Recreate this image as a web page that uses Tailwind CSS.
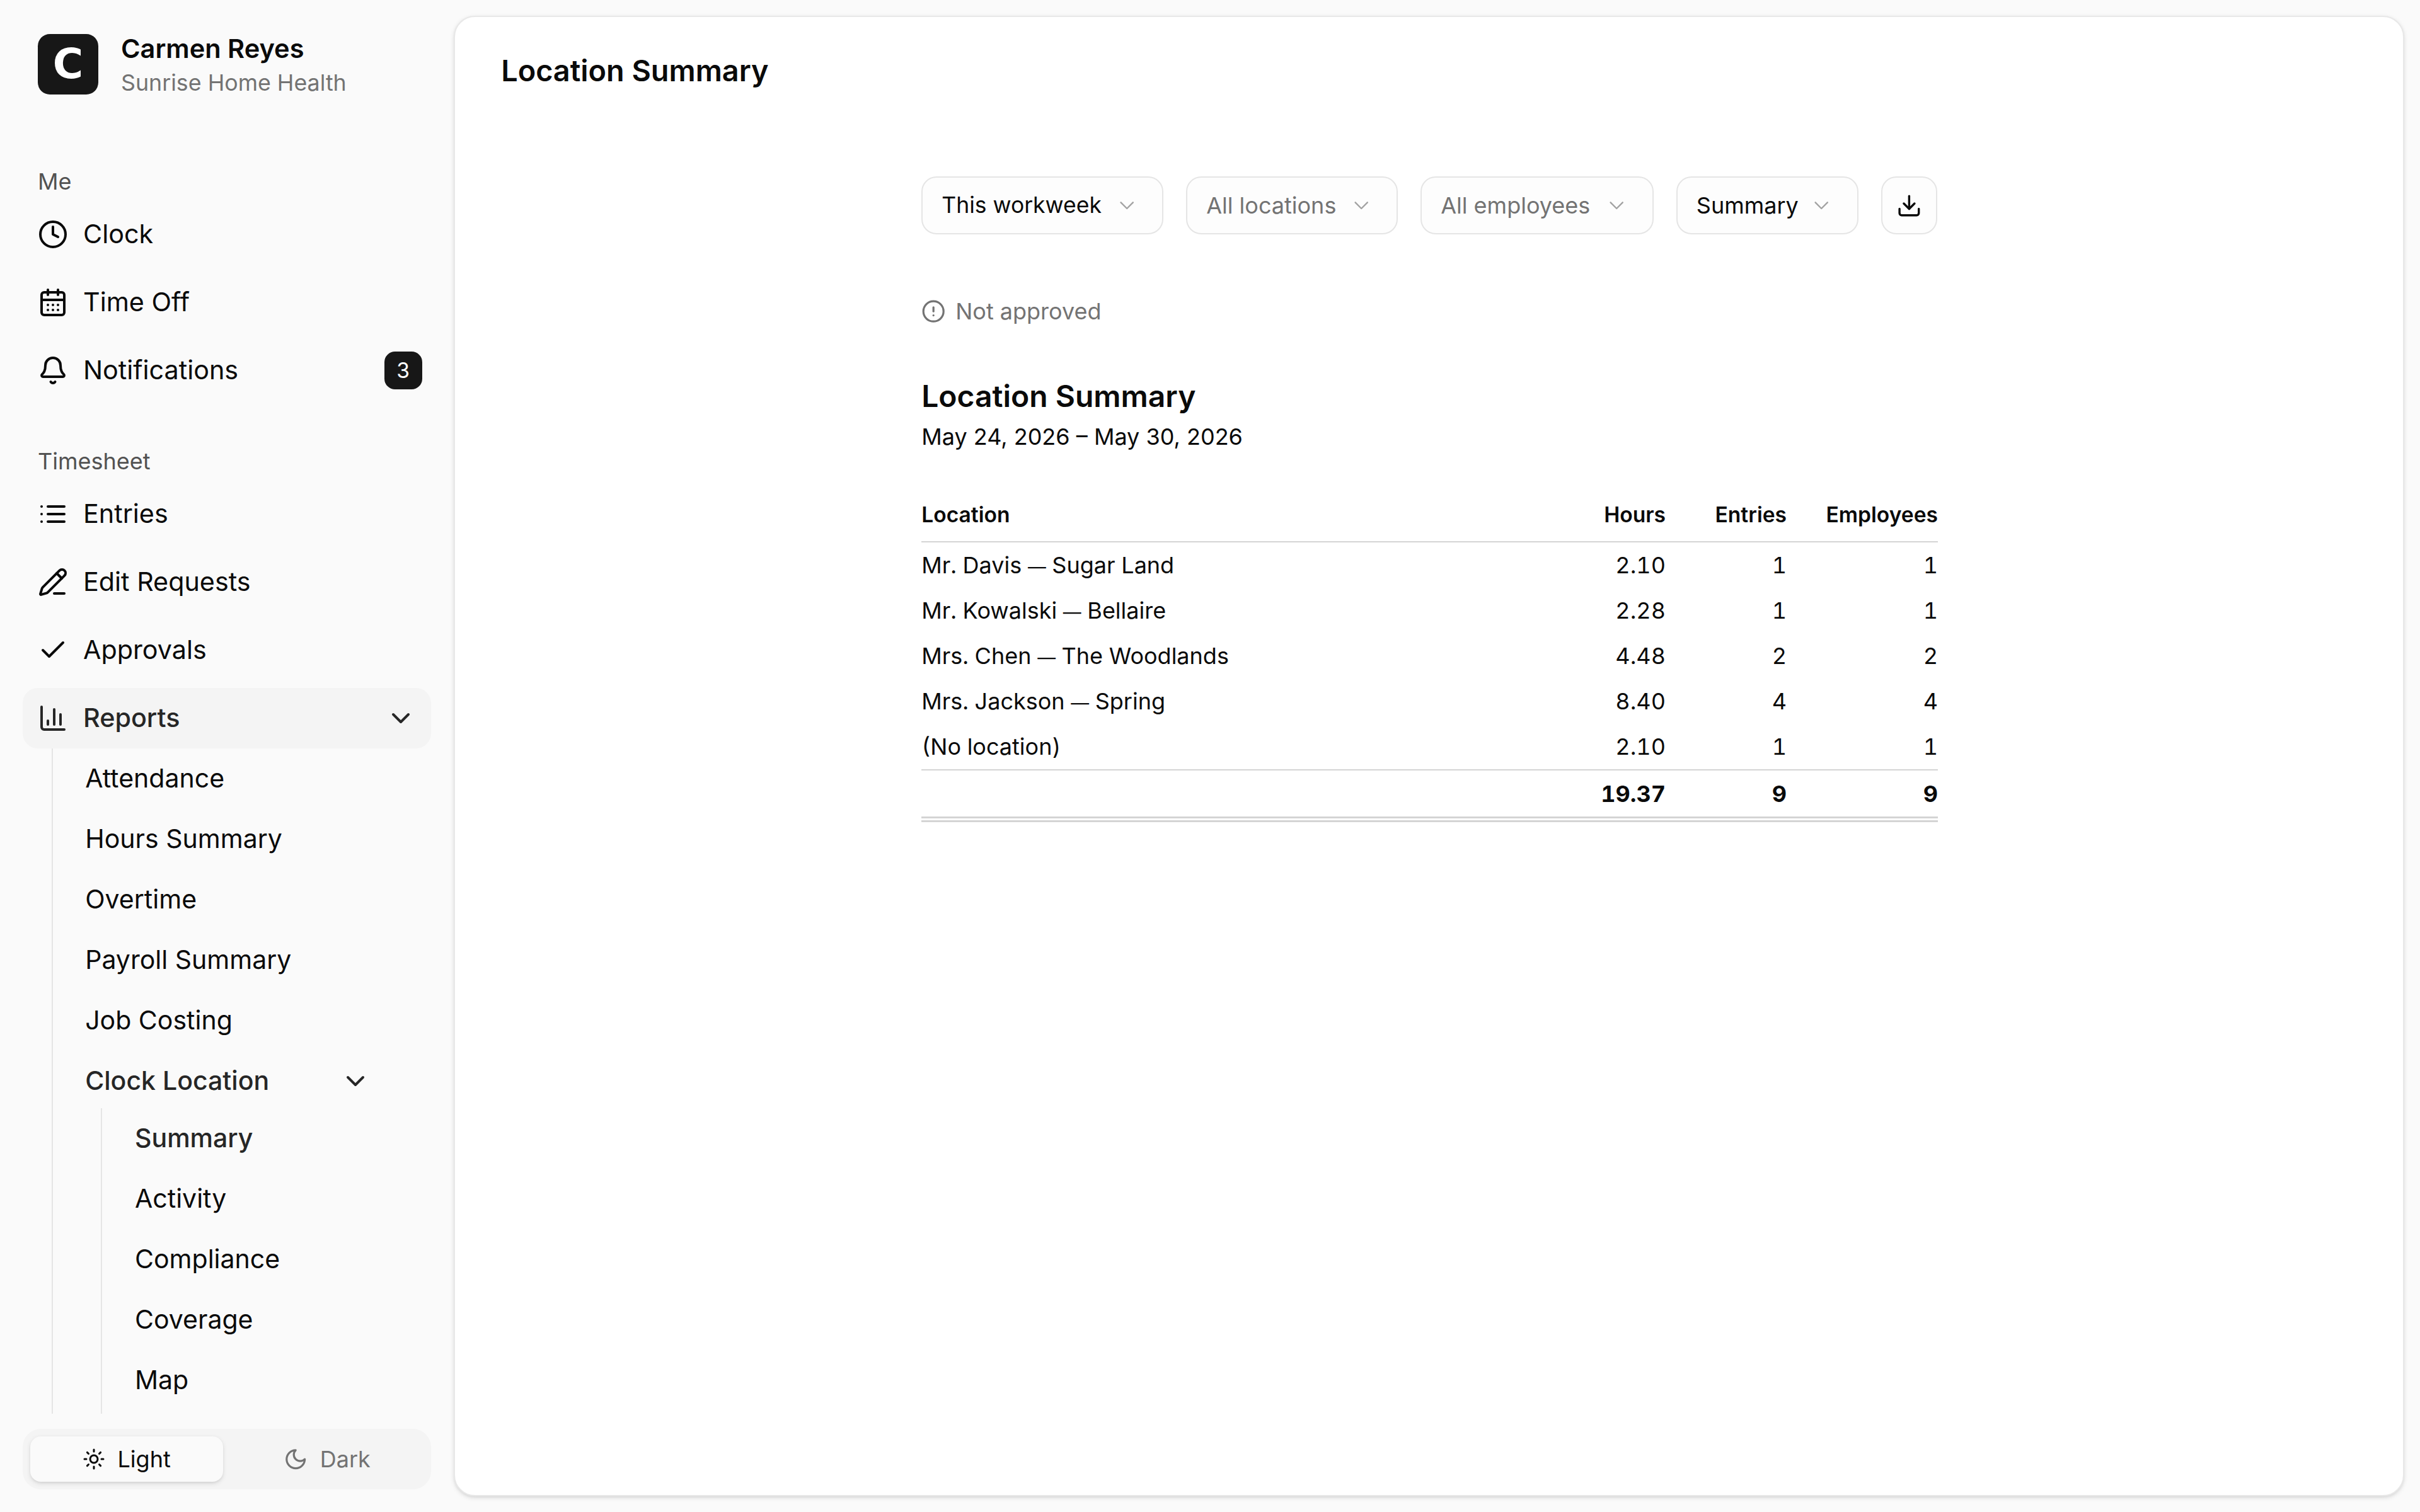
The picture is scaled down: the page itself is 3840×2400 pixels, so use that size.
<!DOCTYPE html>
<html lang="en">
<head>
  <meta charset="UTF-8">
  <meta name="viewport" content="width=device-width, initial-scale=1.0">
  <script src="https://cdn.jsdelivr.net/npm/@tailwindcss/browser@4"></script>
  <title>Location Summary</title>
</head>
<body class="bg-[#fafafa]">
  <div class="[zoom:2.4] flex w-[1600px] h-[1000px] font-[Inter,sans-serif] text-[#0a0a0a] bg-[#fafafa]">

    <!-- sidebar -->
    <aside class="w-[300px] shrink-0 flex flex-col px-[15px] pt-[22.5px]">
      <div class="flex items-center gap-[15px] px-[10px] h-10">
        <div class="size-10 rounded-lg bg-[#171717] flex items-center justify-center text-white text-[27.5px] leading-none font-bold font-['DejaVu_Sans',sans-serif]">C</div>
        <div>
          <div class="text-[17.3px] leading-[24px] font-semibold">Carmen Reyes</div>
          <div class="text-[14.9px] leading-[20px] text-[#737373]">Sunrise Home Health</div>
        </div>
      </div>

      <div class="mt-[47.5px] px-[10px] h-5 mb-[5px] text-[15px] leading-5 text-[#525252]">Me</div>
      <nav class="flex flex-col gap-[5px] text-[17.2px]">
        <a class="flex items-center gap-[10px] h-10 px-[10px]">
          <svg class="size-5" viewBox="0 0 24 24" fill="none" stroke="currentColor" stroke-width="2" stroke-linecap="round" stroke-linejoin="round"><circle cx="12" cy="12" r="10"/><path d="M12 6v6l4 2"/></svg>
          Clock
        </a>
        <a class="flex items-center gap-[10px] h-10 px-[10px]">
          <svg class="size-5" viewBox="0 0 24 24" fill="none" stroke="currentColor" stroke-width="2" stroke-linecap="round" stroke-linejoin="round"><path d="M8 2v4"/><path d="M16 2v4"/><rect width="18" height="18" x="3" y="4" rx="2"/><path d="M3 10h18"/><path d="M8 14h.01"/><path d="M12 14h.01"/><path d="M16 14h.01"/><path d="M8 18h.01"/><path d="M12 18h.01"/><path d="M16 18h.01"/></svg>
          Time Off
        </a>
        <a class="flex items-center gap-[10px] h-10 px-[10px]">
          <svg class="size-5" viewBox="0 0 24 24" fill="none" stroke="currentColor" stroke-width="2" stroke-linecap="round" stroke-linejoin="round"><path d="M10.268 21a2 2 0 0 0 3.464 0"/><path d="M3.262 15.326A1 1 0 0 0 4 17h16a1 1 0 0 0 .74-1.673C19.41 13.956 18 12.499 18 8A6 6 0 0 0 6 8c0 4.499-1.411 5.956-2.738 7.326"/></svg>
          Notifications
          <span class="ml-auto -mr-1 size-[25px] rounded-[7px] bg-[#171717] text-white text-[14px] flex items-center justify-center">3</span>
        </a>
      </nav>

      <div class="mt-[30px] px-[10px] h-5 mb-[5px] text-[15px] leading-5 text-[#525252]">Timesheet</div>
      <nav class="flex flex-col gap-[5px] text-[17.2px]">
        <a class="flex items-center gap-[10px] h-10 px-[10px]">
          <svg class="size-5" viewBox="0 0 24 24" fill="none" stroke="currentColor" stroke-width="2" stroke-linecap="round" stroke-linejoin="round"><path d="M3 12h.01"/><path d="M3 18h.01"/><path d="M3 6h.01"/><path d="M8 12h13"/><path d="M8 18h13"/><path d="M8 6h13"/></svg>
          Entries
        </a>
        <a class="flex items-center gap-[10px] h-10 px-[10px]">
          <svg class="size-5" viewBox="0 0 24 24" fill="none" stroke="currentColor" stroke-width="2" stroke-linecap="round" stroke-linejoin="round"><path d="M13 21h8"/><path d="m15 5 4 4"/><path d="M21.174 6.812a1 1 0 0 0-3.986-3.987L3.842 16.174a2 2 0 0 0-.5.83l-1.321 4.352a.5.5 0 0 0 .623.622l4.353-1.32a2 2 0 0 0 .83-.497z"/></svg>
          Edit Requests
        </a>
        <a class="flex items-center gap-[10px] h-10 px-[10px]">
          <svg class="size-5" viewBox="0 0 24 24" fill="none" stroke="currentColor" stroke-width="2" stroke-linecap="round" stroke-linejoin="round"><path d="M20 6 9 17l-5-5"/></svg>
          Approvals
        </a>
        <a class="flex items-center gap-[10px] h-10 px-[10px] rounded-[10px] bg-[#f4f4f4] font-medium text-[#262626]">
          <svg class="size-5" viewBox="0 0 24 24" fill="none" stroke="currentColor" stroke-width="2" stroke-linecap="round" stroke-linejoin="round"><path d="M3 3v16a2 2 0 0 0 2 2h16"/><path d="M18 17V9"/><path d="M13 17V5"/><path d="M8 17v-3"/></svg>
          Reports
          <svg class="size-5 ml-auto" viewBox="0 0 24 24" fill="none" stroke="currentColor" stroke-width="2" stroke-linecap="round" stroke-linejoin="round"><path d="m6 9 6 6 6-6"/></svg>
        </a>
      </nav>

      <div class="ml-[19px] mr-[30px] pl-3 border-l border-[#e5e5e5] text-[17.1px]">
        <a class="flex items-center h-10 pl-[9.5px] pr-[10px]">Attendance</a>
        <a class="flex items-center h-10 pl-[9.5px] pr-[10px]">Hours Summary</a>
        <a class="flex items-center h-10 pl-[9.5px] pr-[10px]">Overtime</a>
        <a class="flex items-center h-10 pl-[9.5px] pr-[10px]">Payroll Summary</a>
        <a class="flex items-center h-10 pl-[9.5px] pr-[10px]">Job Costing</a>
        <a class="flex items-center h-10 pl-[9.5px] pr-[10px] font-medium text-[#262626]">
          Clock Location
          <svg class="size-5 ml-auto" viewBox="0 0 24 24" fill="none" stroke="currentColor" stroke-width="2" stroke-linecap="round" stroke-linejoin="round"><path d="m6 9 6 6 6-6"/></svg>
        </a>
        <div class="ml-[20px] -mt-[2px] pl-3 pb-[2px] border-l border-[#e5e5e5]">
          <a class="flex items-center h-10 pl-[9.5px] pr-[10px] font-medium text-[#262626]">Summary</a>
          <a class="flex items-center h-10 pl-[9.5px] pr-[10px]">Activity</a>
          <a class="flex items-center h-10 pl-[9.5px] pr-[10px]">Compliance</a>
          <a class="flex items-center h-10 pl-[9.5px] pr-[10px]">Coverage</a>
          <a class="flex items-center h-10 pl-[9.5px] pr-[10px]">Map</a>
        </div>
      </div>

      <div class="mt-[10px] h-10 rounded-[12px] bg-[#f4f4f4] p-[5px] flex gap-[5px] text-[15px]">
        <button class="flex-1 flex items-center justify-center gap-2 rounded-[7px] bg-[#fafafa] shadow-sm">
          <svg class="size-[15px]" viewBox="0 0 24 24" fill="none" stroke="currentColor" stroke-width="2" stroke-linecap="round" stroke-linejoin="round"><circle cx="12" cy="12" r="4"/><path d="M12 2v2"/><path d="M12 20v2"/><path d="m4.93 4.93 1.41 1.41"/><path d="m17.66 17.66 1.41 1.41"/><path d="M2 12h2"/><path d="M20 12h2"/><path d="m6.34 17.66-1.41 1.41"/><path d="m19.07 4.93-1.41 1.41"/></svg>
          Light
        </button>
        <button class="flex-1 flex items-center justify-center gap-2 rounded-[7px] text-[#737373]">
          <svg class="size-4" viewBox="0 0 24 24" fill="none" stroke="currentColor" stroke-width="2" stroke-linecap="round" stroke-linejoin="round"><path d="M12 3a6 6 0 0 0 9 9 9 9 0 1 1-9-9Z"/></svg>
          Dark
        </button>
      </div>
    </aside>

    <!-- main panel -->
    <main class="flex-1 my-[10.5px] mr-[10.5px] pl-px rounded-[14px] bg-white border border-[#e8e8e8] shadow-sm">
      <h1 class="pl-[29.5px] pt-[23.5px] text-[19.5px] leading-6 font-semibold">Location Summary</h1>

      <div class="w-[672px] mx-auto">
        <div class="mt-[58px] flex gap-[15px] text-[15px]">
          <button class="h-[38px] w-[160px] pl-[12.5px] pr-[15.5px] flex items-center justify-between rounded-[10px] border border-[#e5e5e5] bg-[#fdfdfd]">
            <span class="text-[14.8px]">This workweek</span>
            <svg class="size-4 text-[#a3a3a3]" viewBox="0 0 24 24" fill="none" stroke="currentColor" stroke-width="1.5" stroke-linecap="round" stroke-linejoin="round"><path d="m6 9 6 6 6-6"/></svg>
          </button>
          <button class="h-[38px] w-[140px] pl-[12.5px] pr-[15.5px] flex items-center justify-between rounded-[10px] border border-[#e5e5e5] bg-[#fdfdfd] text-[#737373]">
            All locations
            <svg class="size-4 text-[#a3a3a3]" viewBox="0 0 24 24" fill="none" stroke="currentColor" stroke-width="1.5" stroke-linecap="round" stroke-linejoin="round"><path d="m6 9 6 6 6-6"/></svg>
          </button>
          <button class="h-[38px] w-[154px] pl-[12.5px] pr-[15.5px] flex items-center justify-between rounded-[10px] border border-[#e5e5e5] bg-[#fdfdfd] text-[#737373]">
            All employees
            <svg class="size-4 text-[#a3a3a3]" viewBox="0 0 24 24" fill="none" stroke="currentColor" stroke-width="1.5" stroke-linecap="round" stroke-linejoin="round"><path d="m6 9 6 6 6-6"/></svg>
          </button>
          <button class="h-[38px] w-[120.5px] pl-[12.5px] pr-[15.5px] flex items-center justify-between rounded-[10px] border border-[#e5e5e5] bg-[#fdfdfd]">
            Summary
            <svg class="size-4 text-[#a3a3a3]" viewBox="0 0 24 24" fill="none" stroke="currentColor" stroke-width="1.5" stroke-linecap="round" stroke-linejoin="round"><path d="m6 9 6 6 6-6"/></svg>
          </button>
          <button class="h-[38px] w-[37px] flex items-center justify-center rounded-[10px] border border-[#e5e5e5] bg-[#fdfdfd]">
            <svg class="size-[17px]" viewBox="0 0 24 24" fill="none" stroke="currentColor" stroke-width="2" stroke-linecap="round" stroke-linejoin="round"><path d="M12 15V3"/><path d="M21 15v4a2 2 0 0 1-2 2H5a2 2 0 0 1-2-2v-4"/><path d="m7 10 5 5 5-5"/></svg>
          </button>
        </div>

        <div class="mt-[41px] h-5 flex items-center gap-[6.5px] text-[15px] text-[#737373]">
          <svg class="size-4" viewBox="0 0 24 24" fill="none" stroke="currentColor" stroke-width="2" stroke-linecap="round" stroke-linejoin="round"><circle cx="12" cy="12" r="10"/><path d="M12 8v4"/><path d="M12 16h.01"/></svg>
          Not approved
        </div>

        <h2 class="mt-[32px] text-[20px] leading-7 font-semibold">Location Summary</h2>
        <p class="mt-[2px] text-[15px] leading-[22px]">May 24, 2026 – May 30, 2026</p>

        <table class="mt-[23px] w-full table-fixed border-separate border-spacing-0 text-[15px]">
          <thead class="text-[14px]">
            <tr class="h-9">
              <th class="font-semibold text-left border-b border-[#d4d4d4]">Location</th>
              <th class="w-[100px] font-semibold text-right border-b border-[#d4d4d4]">Hours</th>
              <th class="w-[80px] font-semibold text-right border-b border-[#d4d4d4]">Entries</th>
              <th class="w-[100px] font-semibold text-right border-b border-[#d4d4d4]">Employees</th>
            </tr>
          </thead>
          <tbody class="tabular-nums">
            <tr class="h-[30px]"><td>Mr. Davis <span class="text-[12px]">—</span> Sugar Land</td><td class="text-right">2.10</td><td class="text-right">1</td><td class="text-right">1</td></tr>
            <tr class="h-[30px]"><td>Mr. Kowalski <span class="text-[12px]">—</span> Bellaire</td><td class="text-right">2.28</td><td class="text-right">1</td><td class="text-right">1</td></tr>
            <tr class="h-[30px]"><td>Mrs. Chen <span class="text-[12px]">—</span> The Woodlands</td><td class="text-right">4.48</td><td class="text-right">2</td><td class="text-right">2</td></tr>
            <tr class="h-[30px]"><td>Mrs. Jackson <span class="text-[12px]">—</span> Spring</td><td class="text-right">8.40</td><td class="text-right">4</td><td class="text-right">4</td></tr>
            <tr class="h-[30px]"><td>(No location)</td><td class="text-right">2.10</td><td class="text-right">1</td><td class="text-right">1</td></tr>
          </tbody>
          <tfoot class="tabular-nums font-bold">
            <tr class="h-[35px]">
              <td class="border-t border-b-4 [border-bottom-style:double] border-[#d4d4d4]"></td>
              <td class="text-right border-t border-b-4 [border-bottom-style:double] border-[#d4d4d4]">19.37</td>
              <td class="text-right border-t border-b-4 [border-bottom-style:double] border-[#d4d4d4]">9</td>
              <td class="text-right border-t border-b-4 [border-bottom-style:double] border-[#d4d4d4]">9</td>
            </tr>
          </tfoot>
        </table>
      </div>
    </main>
  </div>
</body>
</html>
